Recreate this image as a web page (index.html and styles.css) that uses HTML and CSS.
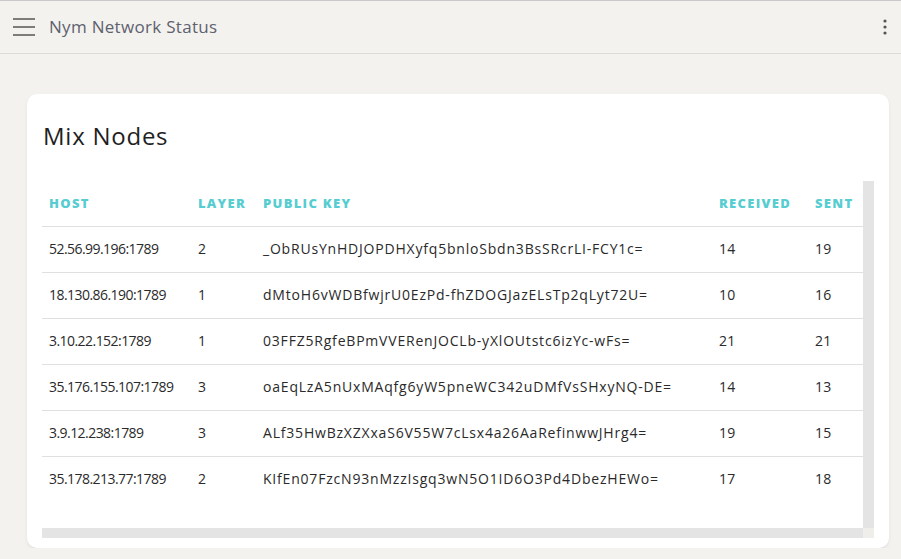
FILE: index.html
```html
<!DOCTYPE html>
<html lang="en">
<head>
<meta charset="utf-8">
<title>Nym Network Status</title>
<link rel="stylesheet" href="styles.css">
</head>
<body>
<header class="appbar">
  <button class="menu-btn" aria-label="menu">
    <svg width="24" height="20" viewBox="0 0 24 20"><path d="M1 2h22M1 10h22M1 18h22" stroke="#555" stroke-width="1.5" fill="none"/></svg>
  </button>
  <h1 class="appbar-title">Nym Network Status</h1>
  <button class="more-btn" aria-label="more">
    <svg width="4" height="16" viewBox="0 0 4 16"><circle cx="2" cy="2" r="1.6" fill="#555"/><circle cx="2" cy="8" r="1.6" fill="#555"/><circle cx="2" cy="14" r="1.6" fill="#555"/></svg>
  </button>
</header>
<main class="content">
  <section class="card">
    <h2 class="card-title">Mix Nodes</h2>
    <div class="table-frame">
      <div class="table-wrap">
        <table class="nodes">
          <thead>
            <tr>
              <th class="c-host">Host</th>
              <th class="c-layer">Layer</th>
              <th class="c-key">Public Key</th>
              <th class="c-recv">Received</th>
              <th class="c-sent">Sent</th>
            </tr>
          </thead>
          <tbody>
            <tr><td class="host">52.56.99.196:1789</td><td>2</td><td class="key">_ObRUsYnHDJOPDHXyfq5bnloSbdn3BsSRcrLI-FCY1c=</td><td>14</td><td>19</td></tr>
            <tr><td class="host">18.130.86.190:1789</td><td>1</td><td class="key">dMtoH6vWDBfwjrU0EzPd-fhZDOGJazELsTp2qLyt72U=</td><td>10</td><td>16</td></tr>
            <tr><td class="host">3.10.22.152:1789</td><td>1</td><td class="key">03FFZ5RgfeBPmVVERenJOCLb-yXlOUtstc6izYc-wFs=</td><td>21</td><td>21</td></tr>
            <tr><td class="host">35.176.155.107:1789</td><td>3</td><td class="key">oaEqLzA5nUxMAqfg6yW5pneWC342uDMfVsSHxyNQ-DE=</td><td>14</td><td>13</td></tr>
            <tr><td class="host">3.9.12.238:1789</td><td>3</td><td class="key">ALf35HwBzXZXxaS6V55W7cLsx4a26AaRefinwwJHrg4=</td><td>19</td><td>15</td></tr>
            <tr><td class="host">35.178.213.77:1789</td><td>2</td><td class="key">KIfEn07FzcN93nMzzIsgq3wN5O1ID6O3Pd4DbezHEWo=</td><td>17</td><td>18</td></tr>
          </tbody>
        </table>
      </div>
      <div class="vbar"></div>
      <div class="hbar"></div>
      <div class="corner"></div>
    </div>
  </section>
</main>
</body>
</html>
```
FILE: styles.css
```css
* { box-sizing: border-box; }
html, body {
  margin: 0;
  padding: 0;
  background: #f3f2ee;
  font-family: "Open Sans", "Liberation Sans", sans-serif;
  color: #2a2a2a;
}
.appbar {
  height: 54px;
  border-top: 1px solid #c9c9c9;
  border-bottom: 1px solid #dddcd8;
  display: flex;
  align-items: center;
  padding: 0 12px 2px 12px;
}
.menu-btn, .more-btn {
  border: 0;
  background: none;
  padding: 0;
  display: flex;
  align-items: center;
  cursor: pointer;
}
.menu-btn { margin-top: 1px; }
.appbar-title {
  margin: 0 0 0 13px;
  font-size: 17px;
  font-weight: 400;
  color: #5e616e;
  letter-spacing: 0.3px;
  flex: 1;
}
.more-btn { margin-right: 2px; margin-top: 1px; }
.content {
  padding: 40px 12px 0 27px;
}
.card {
  width: 862px;
  height: 454px;
  background: #fff;
  border-radius: 10px;
  box-shadow: 0 2px 4px rgba(0,0,0,0.06), 0 1px 1px rgba(0,0,0,0.03);
  padding: 0 15px 10px 15px;
  display: flex;
  flex-direction: column;
}
.card-title {
  margin: 27px 0 30px 1px;
  line-height: 30px;
  font-size: 24px;
  font-weight: 400;
  color: #1f1f24;
  letter-spacing: 0.75px;
}
.table-frame {
  flex: 1;
  display: grid;
  grid-template-columns: 1fr 11px;
  grid-template-rows: 1fr 10px;
  min-height: 0;
}
.table-wrap { overflow: hidden; }
.vbar, .hbar { background: #e4e4e4; }
.corner { background: #efeeea; }
.nodes {
  width: 821px;
  table-layout: fixed;
  border-collapse: collapse;
  font-size: 14px;
}
.nodes th {
  height: 45px;
  text-align: left;
  padding: 0 7px;
  font-size: 13px;
  font-weight: 800;
  text-transform: uppercase;
  color: #56cdd0;
  letter-spacing: 1.3px;
  border-bottom: 1px solid #e0e0e0;
}
.nodes td {
  height: 46px;
  padding: 0 7px 1px;
  border-bottom: 1px solid #e0e0e0;
  white-space: nowrap;
  letter-spacing: 0.3px;
}
.nodes td.host { letter-spacing: -0.55px; }
.nodes td.key { letter-spacing: 0.8px; }
.nodes tbody tr:last-child td { border-bottom: 0; }
.c-host { width: 149px; }
.c-layer { width: 65px; }
.c-key { width: 456px; }
.c-recv { width: 96px; }
.c-sent { width: 55px; }
```
